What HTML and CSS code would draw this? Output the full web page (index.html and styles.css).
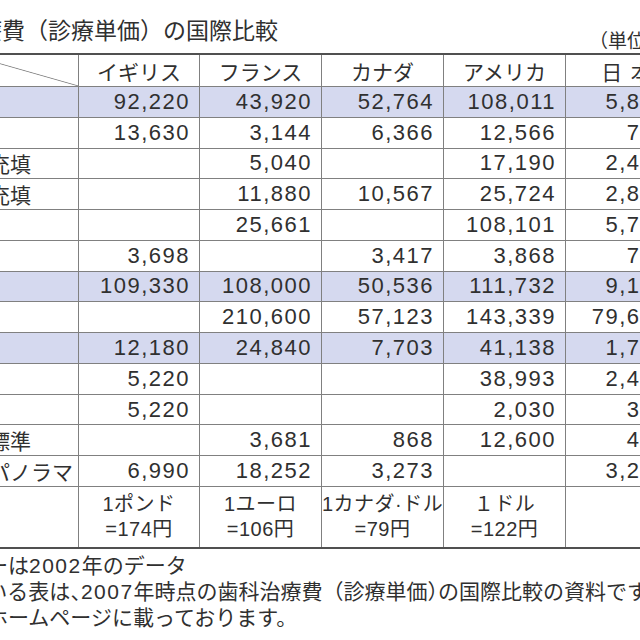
FILE: index.html
```html
<!DOCTYPE html>
<html lang="ja">
<head>
<meta charset="utf-8">
<title>歯科治療費の国際比較</title>
<link rel="stylesheet" href="styles.css">
</head>
<body>
<div class="page">
  <div class="head">
    <div class="title">歯科治療費（診療単価）の国際比較</div>
    <div class="unit">（単位：円）</div>
  </div>
  <table class="fees">
    <colgroup>
      <col class="c-label"><col class="c-uk"><col class="c-num"><col class="c-num"><col class="c-num"><col class="c-jp">
    </colgroup>
    <thead>
      <tr><th class="corner"></th><th>イギリス</th><th>フランス</th><th>カナダ</th><th>アメリカ</th><th class="jp">日 本</th></tr>
    </thead>
    <tbody>
      <tr class="hl"><td class="lbl"></td><td class="n">92,220</td><td class="n">43,920</td><td class="n">52,764</td><td class="n">108,011</td><td class="n jpn">5,830</td></tr>
      <tr><td class="lbl"></td><td class="n">13,630</td><td class="n">3,144</td><td class="n">6,366</td><td class="n">12,566</td><td class="n jpn">790</td></tr>
      <tr><td class="lbl">充填</td><td class="n"></td><td class="n">5,040</td><td class="n"></td><td class="n">17,190</td><td class="n jpn">2,450</td></tr>
      <tr><td class="lbl">充填</td><td class="n"></td><td class="n">11,880</td><td class="n">10,567</td><td class="n">25,724</td><td class="n jpn">2,870</td></tr>
      <tr><td class="lbl"></td><td class="n"></td><td class="n">25,661</td><td class="n"></td><td class="n">108,101</td><td class="n jpn">5,740</td></tr>
      <tr><td class="lbl"></td><td class="n">3,698</td><td class="n"></td><td class="n">3,417</td><td class="n">3,868</td><td class="n jpn">720</td></tr>
      <tr class="hl"><td class="lbl"></td><td class="n">109,330</td><td class="n">108,000</td><td class="n">50,536</td><td class="n">111,732</td><td class="n jpn">9,150</td></tr>
      <tr><td class="lbl"></td><td class="n"></td><td class="n">210,600</td><td class="n">57,123</td><td class="n">143,339</td><td class="n jpn">79,620</td></tr>
      <tr class="hl"><td class="lbl"></td><td class="n">12,180</td><td class="n">24,840</td><td class="n">7,703</td><td class="n">41,138</td><td class="n jpn">1,750</td></tr>
      <tr><td class="lbl"></td><td class="n">5,220</td><td class="n"></td><td class="n"></td><td class="n">38,993</td><td class="n jpn">2,430</td></tr>
      <tr><td class="lbl"></td><td class="n">5,220</td><td class="n"></td><td class="n"></td><td class="n">2,030</td><td class="n jpn">350</td></tr>
      <tr><td class="lbl">標準</td><td class="n"></td><td class="n">3,681</td><td class="n">868</td><td class="n">12,600</td><td class="n jpn">410</td></tr>
      <tr><td class="lbl">パノラマ</td><td class="n">6,990</td><td class="n">18,252</td><td class="n">3,273</td><td class="n"></td><td class="n jpn">3,200</td></tr>
      <tr class="rates"><td class="lbl"></td><td class="rate">1ポンド<br>=174円</td><td class="rate">1ユーロ<br>=106円</td><td class="rate">1カナダ·ドル<br>=79円</td><td class="rate">１ドル<br>=122円</td><td class="rate"></td></tr>
    </tbody>
  </table>
  <div class="notes">
    <div class="fn">※一部のデーターは<span class="d">2002</span>年のデータ</div>
    <div class="fn">上記に掲載している表は<span class="half">、</span><span class="d">2007</span>年時点の歯科治療費（診療単価<span class="half">）</span>の国際比較の資料です。</div>
    <div class="fn fn-long">日本歯科医師会のホームページに載っております。</div>
  </div>
</div>
</body>
</html>
```

FILE: styles.css
```css
html, body {
  margin: 0;
  padding: 0;
  background: #ffffff;
}

body {
  color: #303030;
  font-family: "Liberation Sans", "Noto Sans CJK JP", sans-serif;
}

.page {
  width: 640px;
  height: 640px;
  overflow: hidden;
}

.head {
  display: flex;
  justify-content: space-between;
  align-items: flex-start;
  height: 53px;
}

.title {
  margin: 14px 0 0 -90px;
  font-family: "Noto Sans CJK JP", sans-serif;
  font-size: 23px;
  line-height: 30px;
  white-space: nowrap;
}

.unit {
  margin: 28px -63px 0 0;
  font-family: "Noto Sans CJK JP", sans-serif;
  font-size: 19px;
  line-height: 24px;
  white-space: nowrap;
}

.fees {
  margin-left: -32px;
  border-collapse: collapse;
  table-layout: fixed;
  width: 709px;
}

.c-label { width: 110px; }
.c-uk { width: 121px; }
.c-num { width: 122px; }
.c-jp { width: 122px; }

.fees th,
.fees td {
  border: 1px solid #808080;
  padding: 0;
  vertical-align: middle;
  white-space: nowrap;
  line-height: 24px;
}

.fees thead th {
  height: 31px;
  border-top: 2px solid #505050;
  font-family: "Noto Sans CJK JP", sans-serif;
  font-weight: normal;
  font-size: 21px;
  text-align: center;
}

.fees th.corner {
  background: linear-gradient(to top right, transparent calc(50% - 0.8px), #808080 50%, transparent calc(50% + 0.8px));
}

.fees th.jp {
  word-spacing: 4px;
}

.fees tbody td {
  height: 29.77px;
}

.fees .hl td {
  background: #d5d9ef;
}

.fees td.n {
  text-align: right;
  font-size: 22px;
  letter-spacing: 1.5px;
  padding-right: 9px;
}

.fees td.jpn {
  padding-right: 19px;
}

.fees td.lbl {
  text-align: left;
  padding-left: 20px;
  font-family: "Noto Sans CJK JP", sans-serif;
  font-size: 21px;
}

.fees .rates td {
  height: 60px;
  border-bottom: 2px solid #505050;
}

.fees td.rate {
  text-align: center;
  font-size: 20px;
  line-height: 24.5px;
  letter-spacing: 0.5px;
}

.notes {
  margin-top: 4px;
}

.fn {
  height: 26px;
  margin-left: -160px;
  font-size: 21px;
  line-height: 26px;
  white-space: nowrap;
}

.fn-long {
  margin-left: -181px;
}

.d {
  letter-spacing: 1.5px;
}

.half {
  font-feature-settings: "halt";
}
```
